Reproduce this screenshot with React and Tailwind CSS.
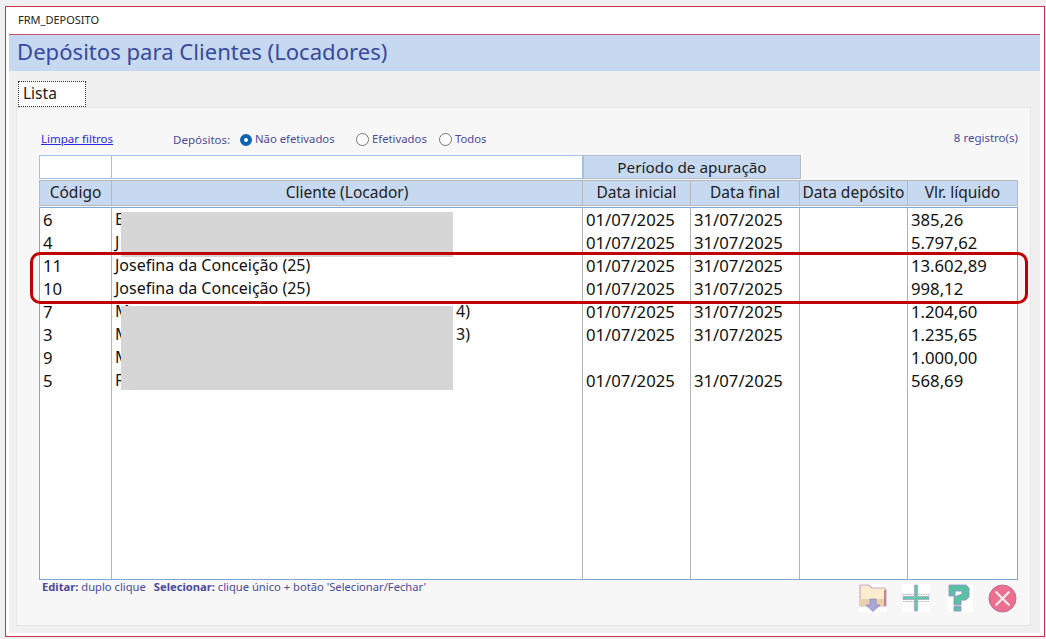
import { useState } from 'react';

const rows = [
    { id: '6', client: 'E', start: '01/07/2025', end: '31/07/2025', value: '385,26' },
    { id: '4', client: 'J', start: '01/07/2025', end: '31/07/2025', value: '5.797,62' },
    { id: '11', client: 'Josefina da Conceição (25)', start: '01/07/2025', end: '31/07/2025', value: '13.602,89' },
    { id: '10', client: 'Josefina da Conceição (25)', start: '01/07/2025', end: '31/07/2025', value: '998,12' },
    { id: '7', client: 'M', tail: '4)', start: '01/07/2025', end: '31/07/2025', value: '1.204,60' },
    { id: '3', client: 'M', tail: '3)', start: '01/07/2025', end: '31/07/2025', value: '1.235,65' },
    { id: '9', client: 'M', start: '', end: '', value: '1.000,00' },
    { id: '5', client: 'F', start: '01/07/2025', end: '31/07/2025', value: '568,69' },
];

const headers = [
    { label: 'Código', w: 'w-[72px]' },
    { label: 'Cliente (Locador)', w: 'w-[471px]' },
    { label: 'Data inicial', w: 'w-[108px]' },
    { label: 'Data final', w: 'w-[109px]' },
    { label: 'Data depósito', w: 'w-[108px]' },
    { label: 'Vlr. líquido', w: 'flex-1' },
];

function Radio({ checked, label, onClick }) {
    return (
        <button onClick={onClick} className="flex items-center gap-[3px] text-[11.3px] text-[#4b4a9c]">
            {checked ? (
                <span className="w-[12px] h-[12px] rounded-full border-[4px] border-[#0f62ae] bg-white"></span>
            ) : (
                <span className="w-[13px] h-[13px] rounded-full border border-[#767676] bg-white"></span>
            )}
            {label}
        </button>
    );
}

function FolderIcon() {
    return (
        <svg width="28" height="28" viewBox="0 0 28 28" className="bg-white">
            <path d="M1 1h9l3 3h12a2 2 0 0 1 2 2v16H1z" fill="#fbeccd" stroke="#c9a9c4" strokeWidth="1.2" />
            <path d="M1 15h26v7H1z" fill="#e8cfae" />
            <path d="M25 6h2v16h-2z" fill="#c9838f" />
            <path d="M11 15h6v6h4l-7 6.5L7 21h4z" fill="#a9a6d8" stroke="#8d8ac4" strokeWidth="0.8" />
        </svg>
    );
}

function PlusIcon() {
    return (
        <svg width="28" height="28" viewBox="0 0 28 28" className="bg-white">
            <path d="M1 10.5h11M16 10.5h11M1 17.5h11M16 17.5h11" stroke="#b9a9cc" strokeWidth="1" strokeDasharray="1.5 1" />
            <path d="M12.5 1h3v11.5H27v3H15.500V27h-3V15.500H1v-3h11.500z" fill="#62c9a6" stroke="#a89bc8" strokeWidth="0.7" />
        </svg>
    );
}

function HelpIcon() {
    return (
        <svg width="25" height="28" viewBox="0 0 25 28" className="bg-white">
            <path d="M1 1H18L21 4V13L18 16H13V21H6V13L14 10V7H7V12H1Z" fill="#55c2a3" stroke="#9a8fc4" strokeWidth="0.9" />
            <path d="M6 22.500h7v4.500H6z" fill="#55c2a3" stroke="#9a8fc4" strokeWidth="0.9" />
        </svg>
    );
}

function CloseIcon() {
    return (
        <svg width="29" height="29" viewBox="0 0 30 30">
            <circle cx="15" cy="15" r="14" fill="#ec6f8f" stroke="#b7709a" strokeWidth="1" />
            <path d="M8.500 8.500l13 13M21.500 8.500l-13 13" stroke="#f6ecec" strokeWidth="2.4" strokeLinecap="round" />
        </svg>
    );
}

export default function App() {
    const [filter, setFilter] = useState('nao');

    return (
        <div className="w-[1046px] h-[639px] bg-[#f0f0f0] pt-[6px] pl-[5px] pr-[1px] pb-[2px] font-['Noto_Sans',sans-serif] overflow-hidden">
            <div className="relative h-full border border-[#c8324a] bg-white pl-[3px] pr-[4px] pb-[3px] flex flex-col">
                <div className="h-[28px] flex items-center pl-[9px] text-[11px] text-[#222] border-b border-[#c8506a] shrink-0">
                    FRM_DEPOSITO
                </div>
                <div className="h-[36px] bg-[#c6d9f1] flex items-center pl-[8px] pb-[2px] text-[22.1px] text-[#3a4a9e] shrink-0">
                    Depósitos para Clientes (Locadores)
                </div>

                <div className="flex-1 bg-[#f0f0f0] pl-[7px] pr-[9px] pb-[7px] flex flex-col min-h-0">
                    <div className="pt-[10px] pl-[2px]">
                        <div className="w-[68px] h-[26px] bg-white border border-dotted border-[#333] flex items-center pl-[4px] pb-[1px] text-[15.5px] text-[#222]">
                            Lista
                        </div>
                    </div>

                    <div className="flex-1 bg-[#f7f7f7] border border-[#e6e6e6] pl-[22px] pr-[12px] flex flex-col min-h-0">
                        <div className="h-[47px] flex items-end pb-[7px] text-[11.5px]">
                            <a href="#" className="ml-[2px] w-[132px] text-[#2a2ae0] underline mb-[1px]">Limpar filtros</a>
                            <span className="w-[67px] text-[#4b4a9c]">Depósitos:</span>
                            <div className="w-[116px]">
                                <Radio checked={filter === 'nao'} label="Não efetivados" onClick={() => setFilter('nao')} />
                            </div>
                            <div className="w-[83px]">
                                <Radio checked={filter === 'efet'} label="Efetivados" onClick={() => setFilter('efet')} />
                            </div>
                            <Radio checked={filter === 'todos'} label="Todos" onClick={() => setFilter('todos')} />
                            <span className="ml-auto mb-[2px] text-[#4b4a9c]">8 registro(s)</span>
                        </div>

                        <div className="flex h-[24px] text-[15.3px]">
                            <div className="w-[73px] bg-white border border-[#a3c2e8]"></div>
                            <div className="w-[471px] bg-white border-y border-r border-[#a3c2e8]"></div>
                            <div className="w-[218px] bg-[#c6d9f1] border border-[#b4bcc8] flex items-center justify-center text-[#222]">
                                Período de apuração
                            </div>
                        </div>

                        <div className="flex h-[26px] mt-[1px] text-[15.5px] text-[#222] border border-[#b9b9b9]">
                            {headers.map((h) => (
                                <div key={h.label} className={`${h.w} bg-[#c6d9f1] border-r border-[#b9b9b9] last:border-r-0 flex items-center justify-center whitespace-nowrap`}>
                                    {h.label}
                                </div>
                            ))}
                        </div>

                        <div className="h-[373px] mt-[1px] bg-white border border-[#7da7d9] flex text-[16.7px] text-[#111] leading-[23px]">
                            <div className="w-[72px] border-r border-[#b5b5b5] pl-[3px]">
                                {rows.map((r) => <div key={r.id} className="h-[23px]">{r.id}</div>)}
                            </div>
                            <div className="w-[471px] border-r border-[#b5b5b5] pl-[3px] text-[16px]">
                                {rows.map((r) => (
                                    <div key={r.id} className="h-[23px] flex justify-between pr-[112px]">
                                        <span>{r.client}</span>
                                        {r.tail && <span>{r.tail}</span>}
                                    </div>
                                ))}
                            </div>
                            <div className="w-[108px] border-r border-[#b5b5b5] pl-[3px]">
                                {rows.map((r) => <div key={r.id} className="h-[23px]">{r.start}</div>)}
                            </div>
                            <div className="w-[109px] border-r border-[#b5b5b5] pl-[3px]">
                                {rows.map((r) => <div key={r.id} className="h-[23px]">{r.end}</div>)}
                            </div>
                            <div className="w-[108px] border-r border-[#b5b5b5]"></div>
                            <div className="flex-1 pl-[3px]">
                                {rows.map((r) => <div key={r.id} className="h-[23px]">{r.value}</div>)}
                            </div>
                        </div>

                        <div className="flex justify-between">
                            <div className="pl-[3px] text-[11.2px] leading-[14px] text-[#4b4a9c] flex gap-[8px] whitespace-nowrap">
                                <span><b>Editar:</b> duplo clique</span>
                                <span><b>Selecionar:</b> clique único + botão 'Selecionar/Fechar'</span>
                            </div>
                            <div className="flex items-start pt-[4px] pr-[1px] blur-[0.4px]">
                                <FolderIcon />
                                <div className="ml-[15px]"><PlusIcon /></div>
                                <div className="ml-[18px]"><HelpIcon /></div>
                                <div className="ml-[15px]"><CloseIcon /></div>
                            </div>
                        </div>
                    </div>
                </div>

                {/* tarjas por cima dos nomes */}
                <div className="absolute left-[115px] top-[205px] w-[332px] h-[45px] bg-[#d6d6d6]"></div>
                <div className="absolute left-[115px] top-[299px] w-[332px] h-[84px] bg-[#d6d6d6]"></div>
                {/* destaque vermelho */}
                <div className="absolute left-[24px] top-[245px] w-[998px] h-[52px] border-[3px] border-[#c00000] rounded-[10px]"></div>
            </div>
        </div>
    );
}
